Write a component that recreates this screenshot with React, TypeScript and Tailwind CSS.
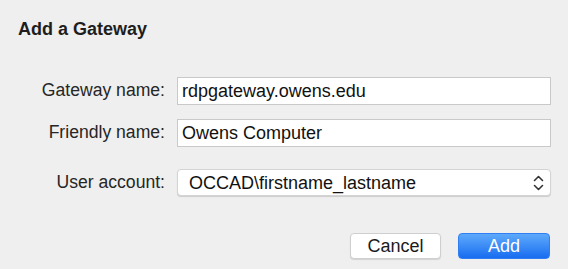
import React from 'react';

const font = { fontFamily: '"Liberation Sans", Arial, Helvetica, sans-serif' };

function Field({ label, value }: { label: string; value: string }) {
  return (
    <>
      <label className="text-right text-[17.6px] text-[#262626] leading-none">{label}</label>
      <div className="h-[28px] bg-white border border-[#c9c9c9] flex items-center pl-[4px] text-[18px] text-[#111] leading-none">
        {value}
      </div>
    </>
  );
}

export default function App() {
  return (
    <div className="w-[568px] h-[269px] bg-[#efefef] overflow-hidden" style={font}>
      <h1 className="pl-[18px] pt-[19px] text-[18px] font-bold text-[#1e1e1e] leading-[20px]">
        Add a Gateway
      </h1>

      <div className="mt-[38px] ml-[20px] w-[531px] grid grid-cols-[145px_1fr] gap-x-[12px] gap-y-[14px] items-center">
        <Field label="Gateway name:" value="rdpgateway.owens.edu" />
        <Field label="Friendly name:" value="Owens Computer" />

        <label className="mt-[8px] text-right text-[17.6px] text-[#262626] leading-none">User account:</label>
        <div className="mt-[8px] h-[27px] bg-white rounded-[4px] border border-[#d4d4d4] shadow-[0_1px_1px_rgba(0,0,0,0.15)] flex items-center justify-between pl-[11px] pr-[6px] text-[18px] text-[#111] leading-none">
          <span>OCCAD\firstname_lastname</span>
          <svg width="11" height="16" viewBox="0 0 11 16" fill="none" stroke="#333" strokeWidth="1.6" strokeLinecap="round" strokeLinejoin="round">
            <path d="M1.5 5.5 L5.5 1.5 L9.5 5.5" />
            <path d="M1.5 10.5 L5.5 14.5 L9.5 10.5" />
          </svg>
        </div>
      </div>

      <div className="mt-[37px] flex justify-end gap-[17px] pr-[18px]">
        <button className="w-[91px] h-[26px] bg-white rounded-[4px] border border-[#cfcfcf] shadow-[0_1px_1px_rgba(0,0,0,0.12)] text-[18px] text-[#1a1a1a] leading-none">
          Cancel
        </button>
        <button className="w-[92px] h-[26px] rounded-[4px] bg-gradient-to-b from-[#5ea9fb] to-[#176cf0] border border-[#2f7ef2] text-[18px] text-white leading-none">
          Add
        </button>
      </div>
    </div>
  );
}
